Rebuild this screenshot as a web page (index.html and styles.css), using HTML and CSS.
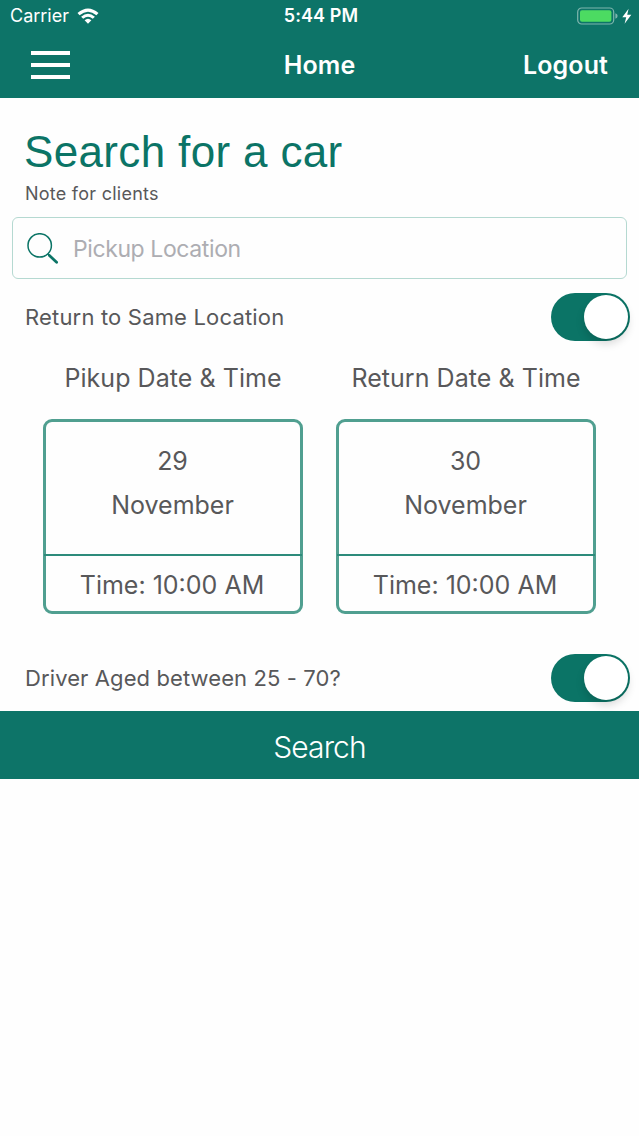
FILE: index.html
```
<!DOCTYPE html>
<html lang="en">
<head>
    <meta charset="utf-8">
    <title>Search for a car</title>
    <link rel="stylesheet" href="styles.css">
</head>
<body>
    <header class="header">
        <div class="status-bar">
            <div class="carrier">
                <span class="carrier-name">Carrier</span>
                <svg width="22" height="16" viewBox="0 0 22 16">
                    <path d="M0.5 5.1 Q11 -4.2 21.5 5.1 L19.4 7.3 Q11 0 2.6 7.3 Z M4.1 8.7 Q11 2.8 17.9 8.7 L15.8 10.8 Q11 6.8 6.2 10.8 Z M7.6 12.2 Q11 9.1 14.4 12.2 L11 15.7 Z" fill="#fff"/>
                </svg>
            </div>
            <span class="clock">5:44 PM</span>
            <div class="battery">
                <svg width="55" height="18" viewBox="0 0 55 18">
                    <rect x="0.7" y="1" width="36" height="16" rx="4" fill="none" stroke="#7fb5ae" stroke-width="1.2"/>
                    <rect x="3" y="3.3" width="31.4" height="11.4" rx="2" fill="#4cdb62"/>
                    <path d="M38.4 6.2 Q40.6 7 40.6 9 Q40.6 11 38.4 11.8 Z" fill="#7fb5ae"/>
                    <path d="M51.6 1.7 L45.3 10.3 L49.2 10.3 L47.6 16.8 L54.3 7.8 L50.2 7.8 Z" fill="#fff"/>
                </svg>
            </div>
        </div>
        <nav class="navbar">
            <div class="menu-icon">
                <span></span>
                <span></span>
                <span></span>
            </div>
            <span class="nav-title">Home</span>
            <span class="logout">Logout</span>
        </nav>
    </header>

    <main>
        <h1>Search for a car</h1>
        <p class="note">Note for clients</p>

        <div class="location">
            <svg width="32" height="32" viewBox="0 0 32 32" fill="none" stroke="#0b7466">
                <circle cx="12.7" cy="12.4" r="11.7" stroke-width="1.5"/>
                <path d="M20.8 20.8 L22.6 22.6" stroke-width="1.6"/>
                <path d="M22.4 22.4 L29.6 29.2" stroke-width="2.8" stroke-linecap="round"/>
            </svg>
            <input type="text" id="pickupLocation" placeholder="Pickup Location">
        </div>

        <div class="option">
            <span class="same-location">Return to Same Location</span>
            <div class="toggle"><div class="knob"></div></div>
        </div>

        <div class="dates">
            <div class="date-column">
                <h2 class="pickup-heading">Pikup Date &amp; Time</h2>
                <div class="date-card">
                    <div class="date">
                        <span>29</span>
                        <span class="month">November</span>
                    </div>
                    <div class="time">Time: 10:00 AM</div>
                </div>
            </div>
            <div class="date-column">
                <h2 class="return-heading">Return Date &amp; Time</h2>
                <div class="date-card">
                    <div class="date">
                        <span>30</span>
                        <span class="month">November</span>
                    </div>
                    <div class="time">Time: 10:00 AM</div>
                </div>
            </div>
        </div>

        <div class="option">
            <span class="driver-age">Driver Aged between 25 - 70?</span>
            <div class="toggle"><div class="knob"></div></div>
        </div>

        <button class="search-button" type="button">Search</button>
    </main>
</body>
</html>
```
FILE: styles.css
```
* { box-sizing: border-box; }
body { margin: 0; background: #fefefe; color: #58585a; font-family: Inter, "Liberation Sans", sans-serif; }
svg { display: block; flex: none; }

.header { height: 98px; background: #0d7468; color: #fff; }
.status-bar, .navbar { display: grid; grid-template-columns: 1fr auto 1fr; align-items: center; }
.status-bar { height: 31px; padding: 0 7px 0 10px; font-size: 18px; }
.carrier { display: flex; align-items: center; gap: 8px; }
.carrier-name { letter-spacing: 0; }
.clock { font-weight: 600; letter-spacing: 0.1px; }
.battery { justify-self: end; }
.navbar { height: 67px; padding: 0 31px; font-size: 25px; font-weight: 600; }
.nav-title, .logout { letter-spacing: 0.1px; }
.menu-icon { display: flex; flex-direction: column; gap: 8px; width: 39px; }
.menu-icon span { height: 4px; background: #fff; }
.logout { justify-self: end; }

h1 { margin: 0; padding: 29px 24px 0; color: #0b7466; font: 44px/50px "Liberation Sans", sans-serif; letter-spacing: 0.35px; }
.note { margin: 0; padding: 6px 25px 0; font-size: 18px; line-height: 22px; letter-spacing: 0.25px; }

.location { display: flex; align-items: center; gap: 14px; height: 62px; margin: 12px 12px 0; padding: 1px 14px 0; border: 1px solid #b5d9d1; border-radius: 6px; }
.location input { flex: 1; padding: 0; border: none; background: none; font: 23px Inter, sans-serif; letter-spacing: -0.4px; }
.location input::placeholder { color: #adadb2; opacity: 1; }

.option { display: flex; align-items: center; justify-content: space-between; height: 48px; padding: 0 9px 0 25px; font-size: 22px; }
.location + .option { margin-top: 14px; }
.same-location { letter-spacing: 0.18px; }
.driver-age { letter-spacing: 0.1px; }
.toggle { display: flex; justify-content: flex-end; width: 79px; height: 48px; padding: 2px; border-radius: 24px; background: #0b7466; }
.knob { width: 44px; height: 44px; border-radius: 50%; background: #fff; box-shadow: 0 5px 8px rgba(0, 0, 0, 0.15); }

.dates { display: flex; gap: 33px; padding: 21px 43px 40px; }
.date-column { width: 260px; }
h2 { margin: 0 0 24px; font-size: 25px; font-weight: 400; line-height: 33px; letter-spacing: 0.05px; text-align: center; white-space: nowrap; }
.date-card { height: 195px; border: 3px solid #509f90; border-radius: 9px; font-size: 25px; text-align: center; }
.date { display: flex; flex-direction: column; height: 132px; padding: 17px 1px 0 0; line-height: 44px; }
.time { height: 57px; margin: 0 -2px; padding-right: 2px; border-top: 2px solid #2d8b7b; line-height: 58px; }

.search-button { display: block; width: 100%; height: 68px; margin-top: 9px; padding: 3px 0 0; border: none; background: #0d7468; color: #fff; font: 300 30px Inter, sans-serif; letter-spacing: -0.9px; }
```
